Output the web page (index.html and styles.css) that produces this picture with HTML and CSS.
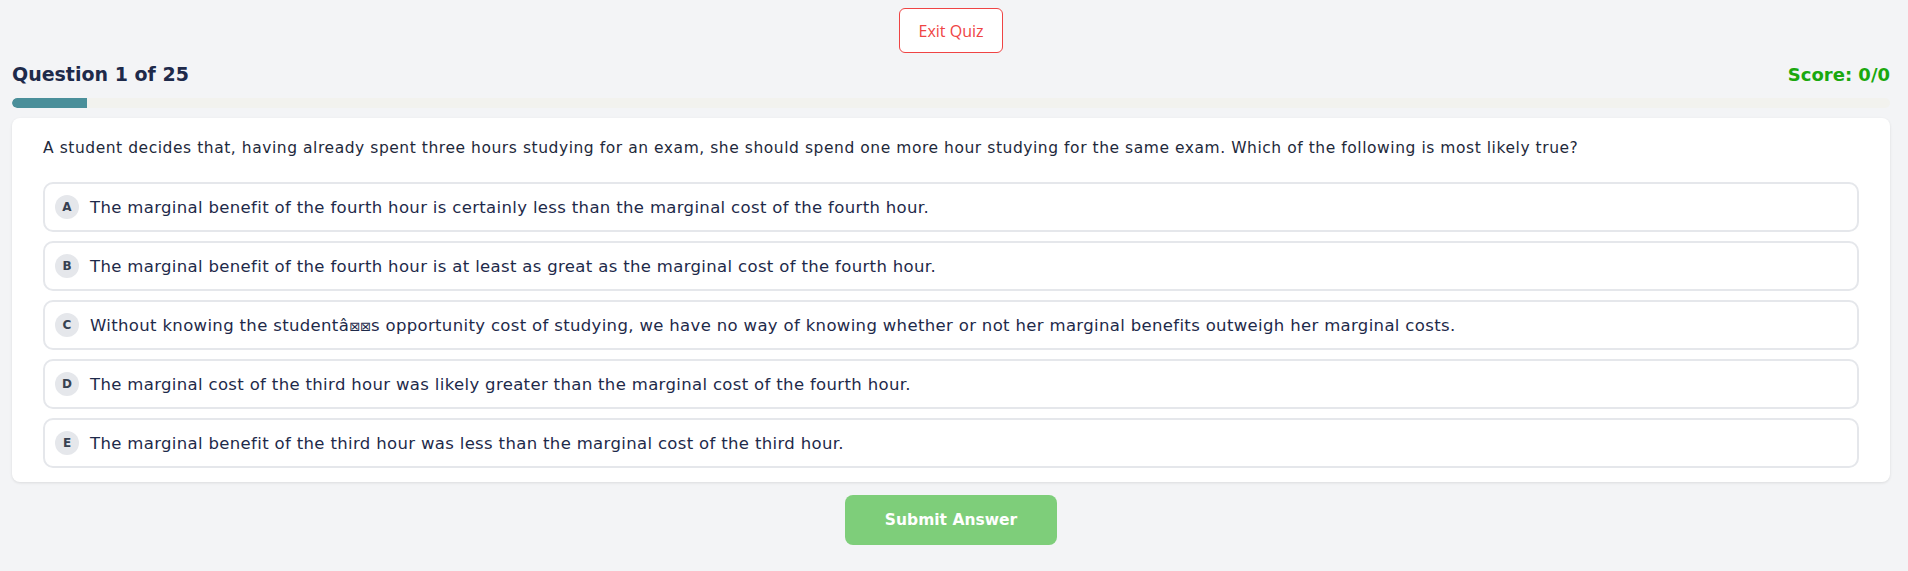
FILE: index.html
```html
<!DOCTYPE html>
<html lang="en">
<head>
<meta charset="utf-8">
<title>Quiz</title>
<link rel="stylesheet" href="styles.css">
</head>
<body>
<div class="page">
  <div class="top-bar">
    <button class="exit-btn" type="button">Exit Quiz</button>
  </div>
  <div class="header-row">
    <h2 class="q-count">Question 1 of 25</h2>
    <div class="score">Score: 0/0</div>
  </div>
  <div class="progress-track"><div class="progress-fill" style="width: 4%"></div></div>
  <div class="card">
    <p class="question">A student decides that, having already spent three hours studying for an exam, she should spend one more hour studying for the same exam. Which of the following is most likely true?</p>
    <div class="options">
      <div class="option"><span class="badge">A</span><span class="opt-text">The marginal benefit of the fourth hour is certainly less than the marginal cost of the fourth hour.</span></div>
      <div class="option"><span class="badge">B</span><span class="opt-text">The marginal benefit of the fourth hour is at least as great as the marginal cost of the fourth hour.</span></div>
      <div class="option"><span class="badge">C</span><span class="opt-text">Without knowing the studentâ<span class="tofu">⊠⊠</span>s opportunity cost of studying, we have no way of knowing whether or not her marginal benefits outweigh her marginal costs.</span></div>
      <div class="option"><span class="badge">D</span><span class="opt-text">The marginal cost of the third hour was likely greater than the marginal cost of the fourth hour.</span></div>
      <div class="option"><span class="badge">E</span><span class="opt-text">The marginal benefit of the third hour was less than the marginal cost of the third hour.</span></div>
    </div>
  </div>
  <div class="submit-row">
    <button class="submit-btn" type="button">Submit Answer</button>
  </div>
</div>
</body>
</html>
```
FILE: styles.css
```css
* { box-sizing: border-box; }
html, body { margin: 0; padding: 0; }
body {
  background: #f3f4f6;
  font-family: "DejaVu Sans", "Noto Sans", sans-serif;
  color: #1f2a44;
}
.page {
  padding: 8px 18px 0 12px;
  display: flex;
  flex-direction: column;
}
.top-bar {
  display: flex;
  justify-content: center;
}
.exit-btn {
  width: 104px;
  height: 45px;
  background: #fff;
  border: 1px solid #ef4444;
  border-radius: 6px;
  color: #ef4444;
  font-family: "Open Sans", sans-serif;
  font-size: 16px;
}
.header-row {
  display: flex;
  justify-content: space-between;
  align-items: center;
  margin-top: 6px;
  height: 30px;
}
.q-count {
  margin: 0;
  font-size: 19px;
  font-weight: 700;
  color: #1e2a4a;
}
.score {
  font-size: 18px;
  font-weight: 700;
  color: #1aa80f;
}
.progress-track {
  margin-top: 9px;
  height: 10px;
  background: #f2f2ee;
  border-radius: 5px;
  overflow: hidden;
}
.progress-fill {
  height: 100%;
  background: #4a8f9a;
  border-radius: 5px 0 0 5px;
}
.card {
  margin-top: 10px;
  background: #fff;
  border-radius: 8px;
  box-shadow: 0 1px 3px rgba(0,0,0,0.1);
  padding: 18px 31px 14px 31px;
}
.question {
  margin: 0 0 22px 0;
  font-size: 15.5px;
  letter-spacing: 0.55px;
  line-height: 24px;
  color: #1e293b;
}
.options {
  display: flex;
  flex-direction: column;
  gap: 9px;
}
.option {
  display: flex;
  align-items: center;
  height: 50px;
  border: 2px solid #e5e7eb;
  border-radius: 10px;
  padding: 0 10px;
  gap: 11px;
}
.badge {
  flex: none;
  width: 24px;
  height: 24px;
  border-radius: 50%;
  background: #e5e7eb;
  display: flex;
  align-items: center;
  justify-content: center;
  font-size: 12px;
  font-weight: 700;
  color: #374151;
}
.opt-text {
  font-size: 16.5px;
  letter-spacing: 0.34px;
  color: #1e2a4a;
}
.tofu {
  font-size: 13px;
  letter-spacing: 0;
}
.submit-row {
  display: flex;
  justify-content: center;
  margin-top: 13px;
}
.submit-btn {
  width: 212px;
  height: 50px;
  border: none;
  border-radius: 8px;
  background: #7ece7a;
  color: #fff;
  font-family: "DejaVu Sans", sans-serif;
  font-size: 15.5px;
  font-weight: 700;
}
```
